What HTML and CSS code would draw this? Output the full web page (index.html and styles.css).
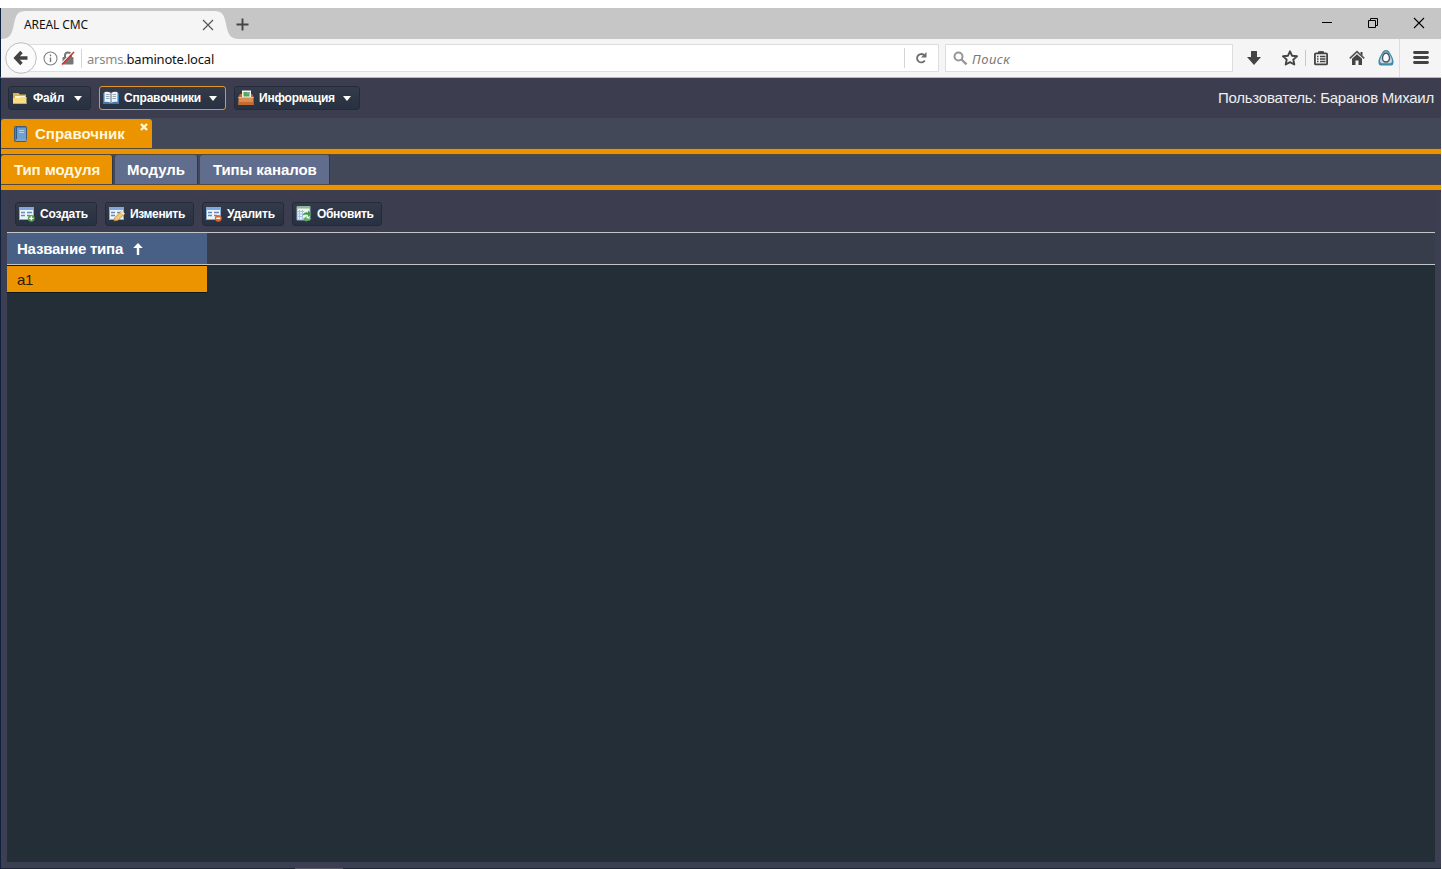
FILE: index.html
```
<!DOCTYPE html>
<html lang="ru">
<head>
<meta charset="utf-8">
<title>AREAL CMC</title>
<link rel="stylesheet" href="styles.css">
</head>
<body>
<div class="window">
  <header class="titlebar">
    <div class="browser-tab">
      <svg class="tab-shape" width="238" height="31" viewBox="0 0 238 31"><path d="M0 31C9 31 11 26 13 16C15 6 17 3 25 3H213C221 3 223 6 225 16C227 26 229 31 238 31Z" fill="#f5f5f5"/></svg>
      <span class="tab-title">AREAL CMC</span>
      <svg class="tab-x" width="12" height="12" viewBox="0 0 12 12"><path d="M1 1L11 11M11 1L1 11" stroke="#555" stroke-width="1.2"/></svg>
    </div>
    <svg class="new-tab" width="13" height="13" viewBox="0 0 13 13"><path d="M6.500 .5V12.500M.5 6.500H12.500" stroke="#444" stroke-width="1.900"/></svg>
    <div class="win-controls">
      <svg width="12" height="12" viewBox="0 0 12 12"><path d="M1 5.500H11" stroke="#000"/></svg>
      <svg width="12" height="12" viewBox="0 0 12 12"><path d="M1.500 3.500H8.500V10.500H1.500ZM3.500 3.500V1.500H10.500V8.500H8.500" stroke="#000" fill="none"/></svg>
      <svg width="12" height="12" viewBox="0 0 12 12"><path d="M1 1L11 11M11 1L1 11" stroke="#000" stroke-width="1.100"/></svg>
    </div>
  </header>

  <div class="navbar">
    <div class="back">
      <svg width="32" height="32" viewBox="0 0 32 32"><circle cx="16" cy="16" r="15.300" fill="#fbfbfb" stroke="#bdbdbd"/><path d="M16.500 10L10.800 16L16.500 22M12 16H22.500" stroke="#424242" stroke-width="3.400" fill="none"/></svg>
    </div>
    <div class="address">
      <svg class="info" width="15" height="15" viewBox="0 0 15 15"><circle cx="7.500" cy="7.500" r="6.500" fill="none" stroke="#808080" stroke-width="1.100"/><path d="M7.500 6.500V11M7.500 3.500V5.200" stroke="#777" stroke-width="1.400"/></svg>
      <svg class="lock" width="14" height="14" viewBox="0 0 14 14"><path d="M4 6.500V4.500A3 3 0 0 1 10 4.500V6.500" stroke="#777" stroke-width="2" fill="none"/><rect x="1.500" y="6" width="11" height="7.500" rx="1" fill="#777"/><path d="M1 12L12 .5" stroke="#fff" stroke-width="1.200"/><path d="M1 13.500L13 1" stroke="#d92d2d" stroke-width="1.500"/></svg>
      <span class="addr-sep"></span>
      <span class="url">arsms.<b>baminote.local</b></span>
      <span class="reload"><svg width="12" height="12" viewBox="0 0 12 12"><path d="M9.800 8.500A4.200 4.200 0 1 1 9 3" stroke="#6d6d6d" stroke-width="1.800" fill="none"/><path d="M11.500 0V5.500H6Z" fill="#6d6d6d"/></svg></span>
    </div>
    <div class="search">
      <svg width="15" height="15" viewBox="0 0 15 15"><circle cx="5.500" cy="5.500" r="4" fill="none" stroke="#969696" stroke-width="2"/><path d="M8.500 8.500L13.500 13.300" stroke="#969696" stroke-width="2.400"/></svg>
      <span class="placeholder">Поиск</span>
    </div>
    <div class="nav-icons">
      <svg class="i-down" width="16" height="16" viewBox="0 0 16 16"><path d="M5 1.500Q5 1 5.500 1H10.500Q11 1 11 1.500V7H15L8 15L1 7H5Z" fill="#444"/></svg>
      <svg class="i-star" width="16" height="16" viewBox="0 0 16 16"><path d="M8 1.300L10 5.700L15 6.300L11.300 9.600L12.300 14.500L8 12.100L3.700 14.500L4.700 9.600L1 6.300L6 5.700Z" fill="none" stroke="#444" stroke-width="1.900" stroke-linejoin="round"/></svg>
      <span class="nav-sep"></span>
      <svg class="i-list" width="16" height="16" viewBox="0 0 16 16"><path d="M5 3V1.500Q5 1 8 1T11 1.500V3" fill="#444"/><rect x="1.900" y="3.400" width="12.200" height="11" rx="1" fill="none" stroke="#444" stroke-width="1.800"/><path d="M4 6.500H5.500M7 6.500H12.500M4 9H5.500M7 9H12.500M4 11.500H5.500M7 11.500H12.500" stroke="#444" stroke-width="1.300"/></svg>
      <svg class="i-home" width="16" height="16" viewBox="0 0 16 16"><path d="M.8 8.300L8 1.700L15.200 8.300" fill="none" stroke="#555" stroke-width="1.700"/><path d="M11.500 2H13.500V6L11.500 4ZM3 8.700L8 4.300L13 8.700V15H9.500V10.500H6.500V15H3Z" fill="#444"/></svg>
      <svg class="i-ext" width="18" height="18" viewBox="0 0 18 18"><path d="M9 1C11 1 12 2 13 4C15 7 17 11 16.500 14Q16.300 16.500 14 16.500H4Q1.700 16.500 1.500 14C1 11 3 7 5 4C6 2 7 1 9 1Z" fill="#3f8aa8"/><path d="M9 2.500C12 2.500 15 10 15 12Q15 14.300 12 14.300H6Q3 14.300 3 12C3 10 6 2.500 9 2.500Z" fill="#c3dce6"/><path d="M9 4C11.500 4 12.500 7.500 12.500 9.500A3.500 3.500 0 0 1 5.500 9.500C5.500 7.500 6.500 4 9 4Z" fill="#fff" stroke="#465565" stroke-width="1.400"/></svg>
      <span class="menu-sep"></span>
      <svg class="i-menu" width="16" height="16" viewBox="0 0 16 16"><path d="M1.500 2.500H14.500M1.500 7.500H14.500M1.500 12.500H14.500" stroke="#424242" stroke-width="2.800" stroke-linecap="round"/></svg>
    </div>
  </div>

  <main class="app">
    <div class="menubar">
      <button class="btn btn-file">
        <svg width="16" height="16" viewBox="0 0 16 16"><path d="M1 3H6.500L8 4.500H14V14H1Z" fill="#dcb250"/><path d="M3 6H13V9H3Z" fill="#fff6cf"/><path d="M1 14V8H7L8.500 7H14.500V14Z" fill="#f8dc83"/><path d="M1 13.500H14.500" stroke="#d6a848"/></svg>
        <span>Файл</span><i class="caret"></i>
      </button>
      <button class="btn btn-ref focused">
        <svg width="16" height="16" viewBox="0 0 16 16"><path d="M0 3H16V14H0Z" fill="#3b79b7"/><path d="M1.500 2Q5 1 8 3Q11 1 14.500 2V12Q11 11 8 13Q5 11 1.500 12Z" fill="#eef3f8"/><path d="M8 3V13" stroke="#566b80"/><path d="M3 4.500H6.500M3 6.500H6.500M3 8.500H6.500M9.500 4.500H13M9.500 6.500H13M9.500 8.500H13" stroke="#9aa9b7"/></svg>
        <span>Справочники</span><i class="caret"></i>
      </button>
      <button class="btn btn-info">
        <svg width="16" height="16" viewBox="0 0 16 16"><path d="M4 8V.5H13V8" fill="#f4f4f4"/><path d="M5.500 2H11.500V6.500H5.500Z" fill="#59a847"/><path d="M8.500 2H11.500V4H8.500Z" fill="#68a8d8"/><path d="M2 4H4V7H13V4H14L16 7.500H0Z" fill="#b96c32"/><path d="M.5 7H15.500V15H.5Z" fill="#dd8c50"/><path d="M.5 7.500H15.500" stroke="#f4b982"/><path d="M.5 12H15.500V15H.5Z" fill="#c26b32"/></svg>
        <span>Информация</span><i class="caret"></i>
      </button>
      <span class="user">Пользователь: Баранов Михаил</span>
    </div>

    <div class="tabs tabs-main">
      <div class="tab-doc">
        <svg width="14" height="16" viewBox="0 0 14 16"><rect x=".5" y=".5" width="12" height="15" rx="1" fill="#4d80b5" stroke="#3e5c7c"/><path d="M3 1V13H12V2H3" fill="#6fa0cf"/><path d="M2.500 1V14" stroke="#315b87"/><path d="M2 14H12.500" stroke="#b9cbdc"/><path d="M5 4.500H10M5 6.500H10" stroke="#b5d0e8"/></svg>
        <span class="doc-name">Справочник</span>
        <svg class="doc-close" width="8" height="8" viewBox="0 0 8 8"><path d="M1 1L7 7M7 1L1 7" stroke="#fff8df" stroke-width="2.400"/></svg>
      </div>
    </div>
    <div class="strip"></div>
    <div class="tabs tabs-sub">
      <div class="sub active sub-type"><span>Тип модуля</span></div>
      <div class="sub sub-module"><span>Модуль</span></div>
      <div class="sub sub-channels"><span>Типы каналов</span></div>
    </div>
    <div class="strip"></div>

    <section class="panel">
      <div class="toolbar">
        <button class="btn tool tool-add">
          <svg width="16" height="16" viewBox="0 0 16 16"><rect x=".5" y="1.500" width="14" height="12" fill="#edf4fc" stroke="#86a9d0"/><path d="M0 2.500H15" stroke="#7fa9da" stroke-width="3"/><path d="M2 6.500H6M8 6.500H13M2 9.500H6M8 9.500H11" stroke="#6b88ae" stroke-width="1.300"/><circle cx="12.300" cy="12.300" r="3.400" fill="#55a545"/><path d="M12.300 10.300V14.300M10.300 12.300H14.300" stroke="#fff" stroke-width="1.300"/></svg>
          <span>Создать</span></button>
        <button class="btn tool tool-edit">
          <svg width="16" height="16" viewBox="0 0 16 16"><rect x=".5" y="1.500" width="14" height="12" fill="#edf4fc" stroke="#86a9d0"/><path d="M0 2.500H15" stroke="#7fa9da" stroke-width="3"/><path d="M2 6.500H6M8 6.500H13M2 9.500H6" stroke="#6b88ae" stroke-width="1.300"/><path d="M5 15L6 11.500L12.500 5L15.500 7.800L9 14.300Z" fill="#f3c773" stroke="#b67d32" stroke-width=".7"/><path d="M12 5.200L15.200 8.200" stroke="#f5e4c3" stroke-width="2"/></svg>
          <span>Изменить</span></button>
        <button class="btn tool tool-del">
          <svg width="16" height="16" viewBox="0 0 16 16"><rect x=".5" y="1.500" width="14" height="12" fill="#edf4fc" stroke="#86a9d0"/><path d="M0 2.500H15" stroke="#7fa9da" stroke-width="3"/><path d="M2 6.500H6M8 6.500H13M2 9.500H6M8 9.500H11" stroke="#6b88ae" stroke-width="1.300"/><circle cx="12.300" cy="12.300" r="3.400" fill="#dd652d"/><path d="M10.300 12.300H14.300" stroke="#fff" stroke-width="1.500"/></svg>
          <span>Удалить</span></button>
        <button class="btn tool tool-refresh">
          <svg width="16" height="16" viewBox="0 0 16 16"><path d="M1 .5H14V14H1Z" fill="#eaf2f6" stroke="#8dabc1"/><path d="M1 1.500H14" stroke="#91bd83" stroke-width="2"/><path d="M3.500 4V13M6.500 4V13M2 5.500H8M2 8H7M2 10.500H7" stroke="#a9c4e2"/><path d="M6.500 9.500Q8 5.500 12 6.500V4.500L15.500 8L12 11V9Q9.500 8 6.500 9.500Z" fill="#3f9b40"/><path d="M15.500 12Q13 15.500 10.500 14.500V16L7 13L10.500 10.200V12Q13 13.500 15.500 12Z" fill="#5cb555"/></svg>
          <span>Обновить</span></button>
      </div>
      <div class="grid-head">
        <div class="col-head"><span>Название типа</span>
          <svg width="10" height="12" viewBox="0 0 10 12"><path d="M5 0L9.800 5H6.200V12H3.800V5H.2Z" fill="#fff"/></svg>
        </div>
      </div>
      <div class="grid-body"><div class="row"><span>a1</span></div></div>
    </section>
    <div class="taskbar-edge"></div>
  </main>
</div>
</body>
</html>
```
FILE: styles.css
```
* { box-sizing: border-box; }
html, body { margin: 0; height: 869px; overflow: hidden; background: #fff; }
body { font-family: "Liberation Sans", Arial, sans-serif; }
svg { display: block; flex: none; }
button { margin: 0; font-family: inherit; }
span { white-space: nowrap; }

.window { width: 1441px; height: 869px; padding-top: 8px; display: flex; flex-direction: column; }

.titlebar { height: 31px; background: #c6c6c6; border-left: 1px solid #10213f; display: flex; align-items: flex-start; flex: none; font-family: "Noto Sans", sans-serif; }
.browser-tab { position: relative; width: 235px; height: 31px; display: flex; align-items: center; padding: 2px 22px 0 23px; justify-content: space-between; }
.tab-shape { position: absolute; left: 0; top: 0; }
.tab-title { position: relative; font-size: 12px; letter-spacing: -0.1px; color: #111; }
.tab-x { position: relative; }
.new-tab { margin: 10px 0 0; }
.win-controls { margin: 9px 16px 0 auto; display: flex; gap: 34px; }

.navbar { height: 39px; flex: none; background: #f5f5f5; border-left: 1px solid #10213f; border-bottom: 1px solid #b8b8b8; padding-left: 4px; display: flex; align-items: center; font-family: "Noto Sans", sans-serif; }
.back { width: 32px; margin-right: -16px; z-index: 1; }
.address { width: 918px; height: 28px; background: #fff; border: 1px solid #dedede; display: flex; align-items: center; padding-left: 21px; }
.lock { margin-left: 3px; }
.addr-sep { width: 1px; height: 19px; background: #d5d5d5; margin: 0 5px 0 6px; }
.url { font-size: 13px; color: #888; letter-spacing: -0.2px; padding-top: 2px; }
.url b { font-weight: 400; color: #111; }
.reload { margin-left: auto; width: 34px; height: 20px; border-left: 1px solid #d5d5d5; display: flex; align-items: center; padding-left: 10px; }
.search { margin-left: 6px; width: 288px; height: 28px; background: #fff; border: 1px solid #dedede; display: flex; align-items: center; padding-left: 7px; gap: 4px; }
.placeholder { font-size: 13px; font-style: italic; color: #777; letter-spacing: 0.5px; padding-top: 2px; }
.nav-icons { display: flex; align-items: center; height: 38px; margin-left: 13px; }
.i-star { margin-left: 20px; }
.nav-sep { width: 1px; height: 16px; background: #c8c8c8; margin: 0 7px; }
.i-home { margin-left: 20px; }
.i-ext { margin-left: 12px; }
.menu-sep { width: 1px; height: 38px; background: #ddd; margin: 0 13px 0 4px; }

.app { flex: 1; display: flex; flex-direction: column; min-height: 0; border-left: 1px solid #10213f; }
.menubar { height: 40px; flex: none; background: #3c3e4f; display: flex; align-items: center; padding: 0 7px; }
.btn { height: 24px; border: 1px solid #242a39; border-radius: 3px; background: linear-gradient(#343b4a, #283141); color: #fff; font-size: 12px; font-weight: 700; letter-spacing: -0.2px; display: flex; align-items: center; padding: 0 0 0 3px; }
.btn span { margin-left: 5px; }
.btn-file { width: 83px; }
.btn-ref { width: 127px; margin-left: 8px; }
.btn-info { width: 126px; margin-left: 8px; }
.focused { border-color: #e0962a; }
.caret { margin-left: auto; margin-right: 8px; border: 4px solid transparent; border-top: 5px solid #fff; border-bottom: 0; }
.user { margin-left: auto; margin-top: -2px; font-size: 15px; letter-spacing: -0.25px; color: #eee; }

.tabs { background: #424857; display: flex; flex: none; color: #fff; font-size: 15px; font-weight: 700; }
.tabs-main { height: 31px; padding-top: 1px; border-bottom: 1px solid #54493e; }
.tab-doc { position: relative; width: 151px; height: 29px; background: #ec9300; border-radius: 3px 3px 0 0; display: flex; align-items: center; padding-left: 13px; color: #fff8df; }
.doc-name { margin-left: 7px; }
.doc-close { position: absolute; left: 139px; top: 4px; }
.strip { height: 5px; flex: none; background: #ec9300; }
.tabs-sub { height: 31px; gap: 2px; border-top: 1px solid #54493e; border-bottom: 1px solid #54493e; letter-spacing: -0.1px; }
.sub { height: 29px; background: #616d8c; border-radius: 3px 3px 0 0; border-right: 1px solid #303746; padding-left: 12px; display: flex; align-items: center; padding-bottom: 1px; }
.active { background: #ec9300; color: #fff8df; padding-left: 13px; }
.sub-type { width: 112px; }
.sub-module { width: 83px; letter-spacing: 0; }
.sub-channels { width: 130px; padding-left: 13px; }

.panel { flex: 1; min-height: 0; background: #3c3f52; padding: 0 6px 6px; display: flex; flex-direction: column; }
.toolbar { height: 42px; flex: none; display: flex; align-items: center; padding: 5px 0 0 8px; gap: 8px; background: #3c3e4f; }
.tool-add { width: 82px; }
.tool-edit { width: 89px; }
.tool-del { width: 82px; }
.tool-refresh { width: 90px; }
.tool-edit, .tool-refresh { letter-spacing: -0.35px; }
.grid-head { height: 33px; flex: none; background: #383d4b; border-top: 1px solid #c2c6c8; border-bottom: 1px solid #c2c6c8; }
.col-head { width: 200px; height: 31px; background: #496086; color: #fff; font-size: 15px; font-weight: 700; letter-spacing: -0.22px; display: flex; align-items: center; padding-left: 10px; gap: 10px; }
.grid-body { flex: 1; background: #242e37; }
.row { width: 200px; height: 28px; background: #ec9300; border-top: 1px solid #10171d; border-bottom: 1px solid #10171d; padding-left: 10px; font-size: 15px; letter-spacing: -0.3px; color: #2b1c05; display: flex; align-items: center; }
.taskbar-edge { height: 1px; flex: none; background: linear-gradient(90deg, #202634 294px, #555764 294px 342px, #202634 342px); }
```
